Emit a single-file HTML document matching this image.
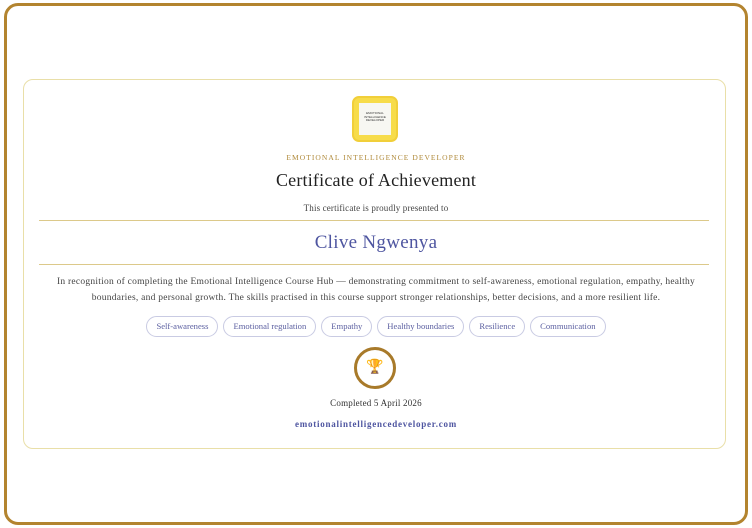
<!DOCTYPE html>
<html><head><meta charset="utf-8"><style>
*{margin:0;padding:0;box-sizing:border-box}
body{width:752px;height:528px;background:#fff;font-family:"Liberation Serif",serif;position:relative;overflow:hidden}
.outer{position:absolute;left:4px;top:3px;width:744px;height:522px;border:3px solid #b3842f;border-radius:14px;background:#fff}
.card{position:absolute;left:23px;top:79px;width:703px;height:370px;border:1px solid #e9dfa8;border-radius:10px}
.c{position:absolute;left:0;width:752px;text-align:center}
.logo{position:absolute;left:352px;top:96px;width:46px;height:46px;background:#f7dc4a;border-radius:7px;border:2px solid #f1cf3a}
.logo div{position:absolute;left:5px;top:5px;width:32px;height:32px;background:#f7f7f2;font:3px "Liberation Sans",sans-serif;color:#333;text-align:center;padding-top:9px;line-height:3.5px}
.hr{position:absolute;left:39px;width:670px;height:1px;background:#dcc98a}
.tags{position:absolute;top:316px;left:0;width:752px;display:flex;justify-content:center;gap:5px}
.tag{border:1px solid #c9cbe3;border-radius:11px;height:21px;padding:0 9px;font-size:8.6px;line-height:19px;color:#5b5fa0}
.trophy{position:absolute;left:354px;top:347px;width:42px;height:42px;border:3px solid #a87a2a;border-radius:50%;text-align:center;font-size:14px;line-height:36px}
</style></head><body>
<div class="outer"></div>
<div class="card"></div>
<div class="logo"><div>EMOTIONAL<br>INTELLIGENCE<br>DEVELOPER</div></div>
<div class="c" style="top:153px;font-size:7.5px;letter-spacing:1.05px;color:#b08a3a">EMOTIONAL INTELLIGENCE DEVELOPER</div>
<div class="c" style="top:170px;font-size:18px;letter-spacing:0.2px;color:#222">Certificate of Achievement</div>
<div class="c" style="top:203px;font-size:9px;letter-spacing:0.15px;color:#444">This certificate is proudly presented to</div>
<div class="hr" style="top:220px"></div>
<div class="c" style="top:232px;font-size:19px;letter-spacing:0.3px;color:#4e55a0">Clive Ngwenya</div>
<div class="hr" style="top:264px"></div>
<div class="c" style="top:274px;font-size:9.5px;letter-spacing:0.25px;line-height:16px;color:#444;padding:0 30px">In recognition of completing the Emotional Intelligence Course Hub — demonstrating commitment to self-awareness, emotional regulation, empathy, healthy<br>boundaries, and personal growth. The skills practised in this course support stronger relationships, better decisions, and a more resilient life.</div>
<div class="tags"><span class="tag">Self-awareness</span><span class="tag">Emotional regulation</span><span class="tag">Empathy</span><span class="tag">Healthy boundaries</span><span class="tag">Resilience</span><span class="tag">Communication</span></div>
<div class="trophy">🏆</div>
<div class="c" style="top:398px;font-size:9px;letter-spacing:0.2px;color:#333">Completed 5 April 2026</div>
<div class="c" style="top:419px;font-size:9px;letter-spacing:0.75px;font-weight:bold;color:#4e55a0">emotionalintelligencedeveloper.com</div>
</body></html>
